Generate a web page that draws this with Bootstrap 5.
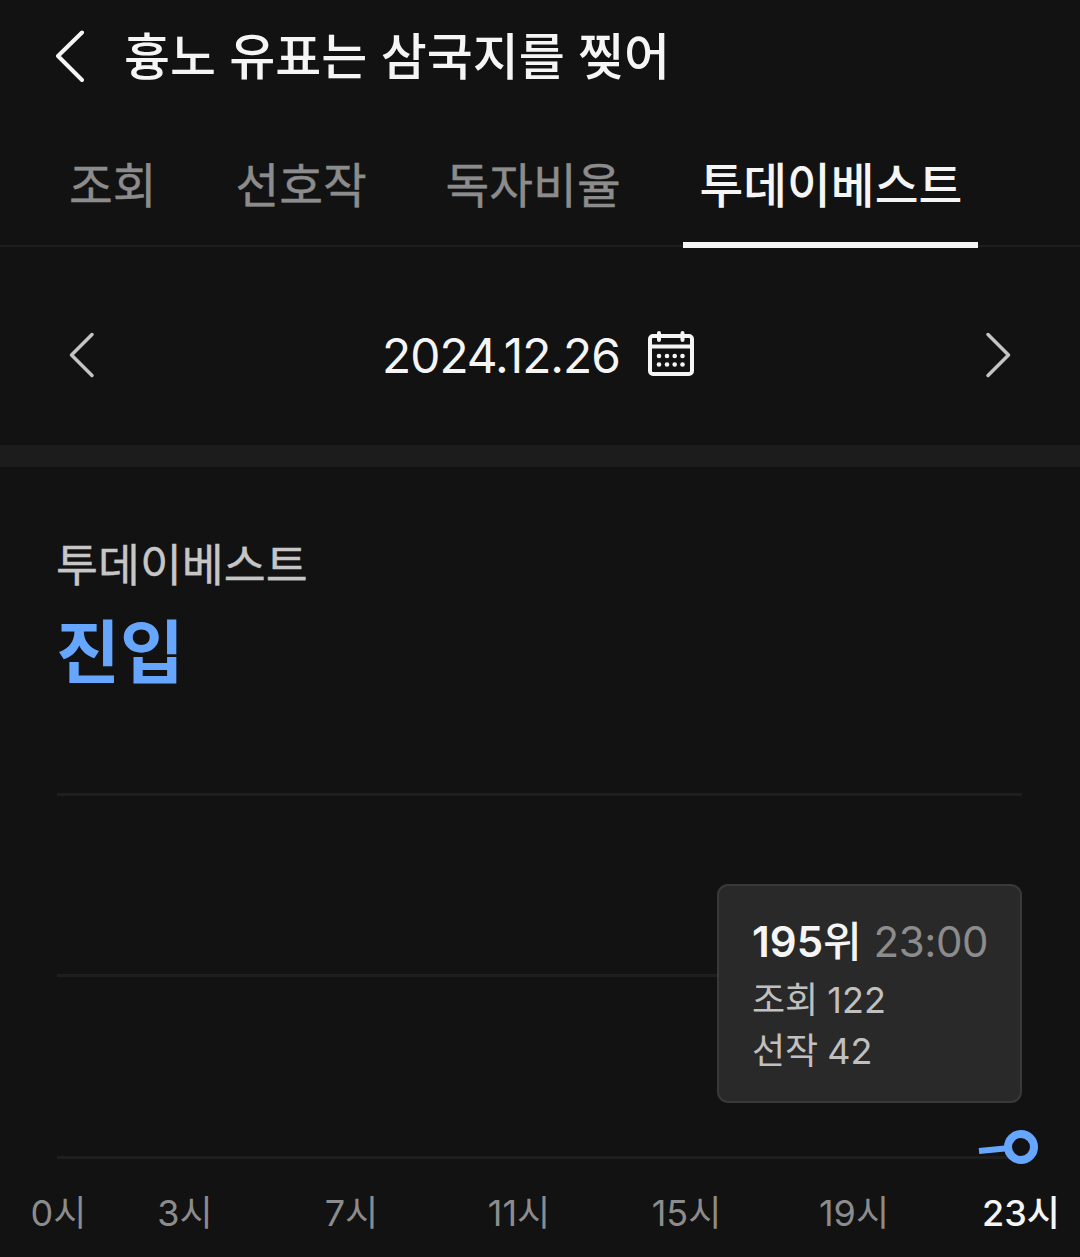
<!DOCTYPE html>
<html lang="ko" data-bs-theme="dark">
<head>
<meta charset="utf-8">
<meta name="viewport" content="width=device-width, initial-scale=1">
<title>투데이베스트</title>
<link href="https://cdn.jsdelivr.net/npm/bootstrap@5.3.0/dist/css/bootstrap.min.css" rel="stylesheet">
<style>
  body { background: #121212; color: #f5f5f5; font-family: Inter, "Noto Sans CJK KR", sans-serif; overflow: hidden; }
  .app-head { height: 116px; padding: 0 0 2px 55px; }
  .app-title { font-size: 50px; line-height: 60px; font-weight: 500; margin-left: 37px; color: #f5f5f5; }
  .app-tabs { height: 132px; padding-left: 53px; gap: 46.8px; box-shadow: inset 0 -1px #121212, inset 0 -3px #1e1e1e; }
  .app-tabs .nav-link { font-size: 47.6px; line-height: 60px; padding: 40px 16px 0; color: #8c8c8c; border-bottom: 6px solid transparent; border-radius: 0; -webkit-text-stroke: .4px; }
  .app-tabs .nav-link.active { color: #f5f5f5; font-weight: 500; border-color: #f5f5f5; -webkit-text-stroke: 0; }
  .day-bar { height: 197px; padding: 16px 68px 0; }
  .day-text { font-size: 47.8px; line-height: 60px; letter-spacing: -1px; padding-top: 2px; }
  .day-icon { margin: 0 2px 4px 26px; }
  .band { height: 22px; background: #1c1c1c; }
  .best { padding: 69px 56px 0; height: 323px; }
  .best-label { font-size: 45.6px; line-height: 60px; color: #c6c6c6; -webkit-text-stroke: .4px; }
  .best-value { font-size: 69.500px; line-height: 90px; font-weight: 700; color: #66a6ff; margin-top: 12px; }
  .chart-area { height: 467px; }
  .chart-area text { font-size: 36px; fill: #8c8c8c; text-anchor: middle; }
  .chart-area text.now { fill: #f5f5f5; font-weight: 500; }
  .tip { top: 94px; left: 717px; width: 305px; height: 219px; padding: 27px 33px; background: #292929; border: 2px solid #393939; border-radius: 11px; white-space: nowrap; }
  .tip-rank { font-size: 42px; line-height: 58px; margin-bottom: 4px; }
  .tip-rank span { color: #8c8c8c; letter-spacing: -.4px; }
  .tip-rank strong { font-weight: 600; }
  .tip-rank .unit { font-weight: 500; }
  .tip-row { font-size: 36px; line-height: 51px; color: #c0c0c0; word-spacing: -1px; }
</style>
</head>
<body>
<header class="app-head d-flex align-items-center">
  <svg width="32" height="54" viewBox="0 0 32 54" fill="none" stroke="#f5f5f5" stroke-width="4" stroke-linecap="round" stroke-linejoin="round"><path d="M27 2.500 3 26 27 50"/></svg>
  <h1 class="app-title mb-0">흉노 유표는 삼국지를 찢어</h1>
</header>
<nav class="app-tabs nav flex-nowrap text-nowrap">
  <a class="nav-link" href="#">조회</a>
  <a class="nav-link" href="#">선호작</a>
  <a class="nav-link" href="#">독자비율</a>
  <a class="nav-link active" href="#">투데이베스트</a>
</nav>
<section class="day-bar d-flex align-items-center justify-content-between">
  <svg width="28" height="48" viewBox="0 0 28 48" fill="none" stroke="#c4c4c4" stroke-width="3.500" stroke-linecap="round" stroke-linejoin="round"><path d="M24 3.500 3.500 24 24 44.500"/></svg>
  <div class="d-flex align-items-center">
    <span class="day-text">2024.12.26</span>
    <svg class="day-icon" width="50" height="50" viewBox="0 0 50 50" fill="none" stroke="#f5f5f5" stroke-width="4" stroke-linecap="round"><rect x="4" y="8" width="42" height="38" rx="3"/><path d="M4 18.500H46M13 5V12M36.500 5V12"/><g fill="#f5f5f5" stroke="none"><circle cx="13" cy="28" r="2.300"/><circle cx="21" cy="28" r="2.300"/><circle cx="28.700" cy="28" r="2.300"/><circle cx="36.500" cy="28" r="2.300"/><circle cx="13" cy="36.500" r="2.300"/><circle cx="21" cy="36.500" r="2.300"/><circle cx="28.700" cy="36.500" r="2.300"/><circle cx="36.500" cy="36.500" r="2.300"/></g></svg>
  </div>
  <svg width="28" height="48" viewBox="0 0 28 48" fill="none" stroke="#c4c4c4" stroke-width="3.500" stroke-linecap="round" stroke-linejoin="round"><path d="M4 3.500 24.500 24 4 44.500"/></svg>
</section>
<div class="band"></div>
<section class="best">
  <div class="best-label">투데이베스트</div>
  <div class="best-value">진입</div>
</section>
<section class="chart-area position-relative">
  <svg class="d-block" width="1080" height="467" viewBox="0 790 1080 467">
    <path d="M57 794.500H1022M57 975.500H1022M57 1157.500H1022" stroke="#1e1e1e" stroke-width="3"/>
    <path d="M979 1151 1010 1148" stroke="#66a6ff" stroke-width="6"/>
    <circle cx="1021" cy="1147" r="13" fill="#121212" stroke="#66a6ff" stroke-width="8"/>
    <text x="58.500" y="1226">0시</text>
    <text x="185" y="1226">3시</text>
    <text x="351.500" y="1226">7시</text>
    <text x="519" y="1226">11시</text>
    <text x="686.500" y="1226">15시</text>
    <text x="854" y="1226">19시</text>
    <text class="now" x="1021" y="1226">23시</text>
  </svg>
  <div class="tip position-absolute">
    <div class="tip-rank"><strong>195<b class="unit">위</b></strong> <span>23:00</span></div>
    <div class="tip-row">조회 122</div>
    <div class="tip-row">선작 42</div>
  </div>
</section>
<script src="https://cdn.jsdelivr.net/npm/bootstrap@5.3.0/dist/js/bootstrap.bundle.min.js"></script>
</body>
</html>
